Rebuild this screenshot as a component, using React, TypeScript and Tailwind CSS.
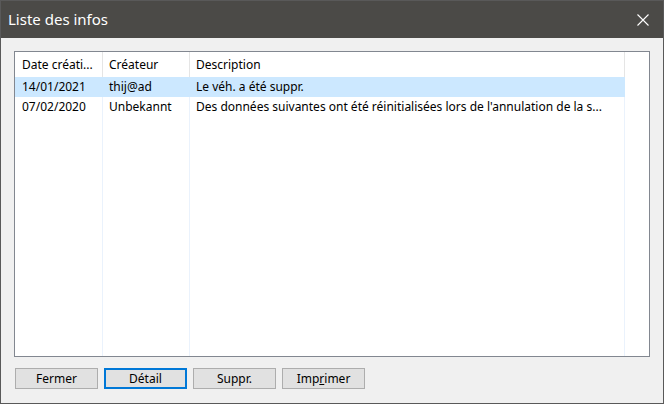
import React from 'react';

interface Row {
  date: string;
  author: string;
  text: string;
  selected?: boolean;
}

const rows: Row[] = [
  { date: '14/01/2021', author: 'thij@ad', text: 'Le véh. a été suppr.', selected: true },
  {
    date: '07/02/2020',
    author: 'Unbekannt',
    text: "Des données suivantes ont été réinitialisées lors de l'annulation de la s...",
  },
];

const font = { fontFamily: '"Noto Sans", "Open Sans", Arial, sans-serif' };

function CloseIcon() {
  return (
    <svg width="12" height="12" viewBox="0 0 12 12" className="block">
      <path d="M0.5 0.5 L11.5 11.5 M11.5 0.5 L0.5 11.5" stroke="#ffffff" strokeWidth="1.1" />
    </svg>
  );
}

function WinButton({ children, focused }: { children: React.ReactNode; focused?: boolean }) {
  return (
    <button
      className={
        focused
          ? 'w-[83px] h-[21px] bg-[#e1e1e1] border-2 border-[#0078d7] text-[12px] text-black leading-none'
          : 'w-[83px] h-[21px] bg-[#e1e1e1] border border-[#adadad] text-[12px] text-black leading-none'
      }
    >
      {children}
    </button>
  );
}

export default function App() {
  return (
    <div className="w-[664px] h-[404px] border border-[#595959] bg-[#f0f0f0] flex flex-col" style={font}>
      {/* title bar */}
      <div className="h-[37px] bg-[#4b4a47] flex items-center justify-between pl-[7px] pr-[14px] shrink-0">
        <span className="text-[15px] text-white">Liste des infos</span>
        <CloseIcon />
      </div>

      <div className="flex-1 flex flex-col px-[13px] pt-[13px]">
        {/* list view */}
        <div className="h-[306px] border border-[#828790] bg-white flex flex-col text-[12px] text-black overflow-hidden">
          <div className="h-[25px] flex shrink-0">
            <div className="w-[88px] border-r border-[#e5e5e5] pl-[7px] flex items-center whitespace-nowrap overflow-hidden">Date créati...</div>
            <div className="w-[87px] border-r border-[#e5e5e5] pl-[6px] flex items-center">Créateur</div>
            <div className="w-[435px] border-r border-[#e5e5e5] pl-[6px] flex items-center">Description</div>
            <div className="flex-1" />
          </div>

          {rows.map((r) => (
            <div key={r.date} className="h-[20px] flex shrink-0">
              <div
                className={
                  r.selected
                    ? 'w-[610px] flex bg-[#cce8ff]'
                    : 'w-[610px] flex'
                }
              >
                <div className={r.selected ? 'w-[88px] pl-[7px] flex items-center' : 'w-[88px] pl-[7px] flex items-center border-r border-[#eaf2fc]'}>
                  {r.date}
                </div>
                <div className={r.selected ? 'w-[87px] pl-[6px] flex items-center' : 'w-[87px] pl-[6px] flex items-center border-r border-[#eaf2fc]'}>
                  {r.author}
                </div>
                <div className={r.selected ? 'w-[435px] pl-[6px] flex items-center whitespace-nowrap overflow-hidden' : 'w-[435px] pl-[6px] flex items-center whitespace-nowrap overflow-hidden border-r border-[#eaf2fc]'}>
                  {r.text}
                </div>
              </div>
              <div className="flex-1" />
            </div>
          ))}

          {/* empty space with column lines */}
          <div className="flex-1 flex">
            <div className="w-[88px] border-r border-[#eaf2fc]" />
            <div className="w-[87px] border-r border-[#eaf2fc]" />
            <div className="w-[435px] border-r border-[#eaf2fc]" />
            <div className="flex-1" />
          </div>
        </div>

        {/* buttons */}
        <div className="flex gap-[6px] mt-[11px] ml-px">
          <WinButton>Fermer</WinButton>
          <WinButton focused>Détail</WinButton>
          <WinButton>Suppr.</WinButton>
          <WinButton>
            Imp<span className="underline">r</span>imer
          </WinButton>
        </div>
      </div>
    </div>
  );
}
